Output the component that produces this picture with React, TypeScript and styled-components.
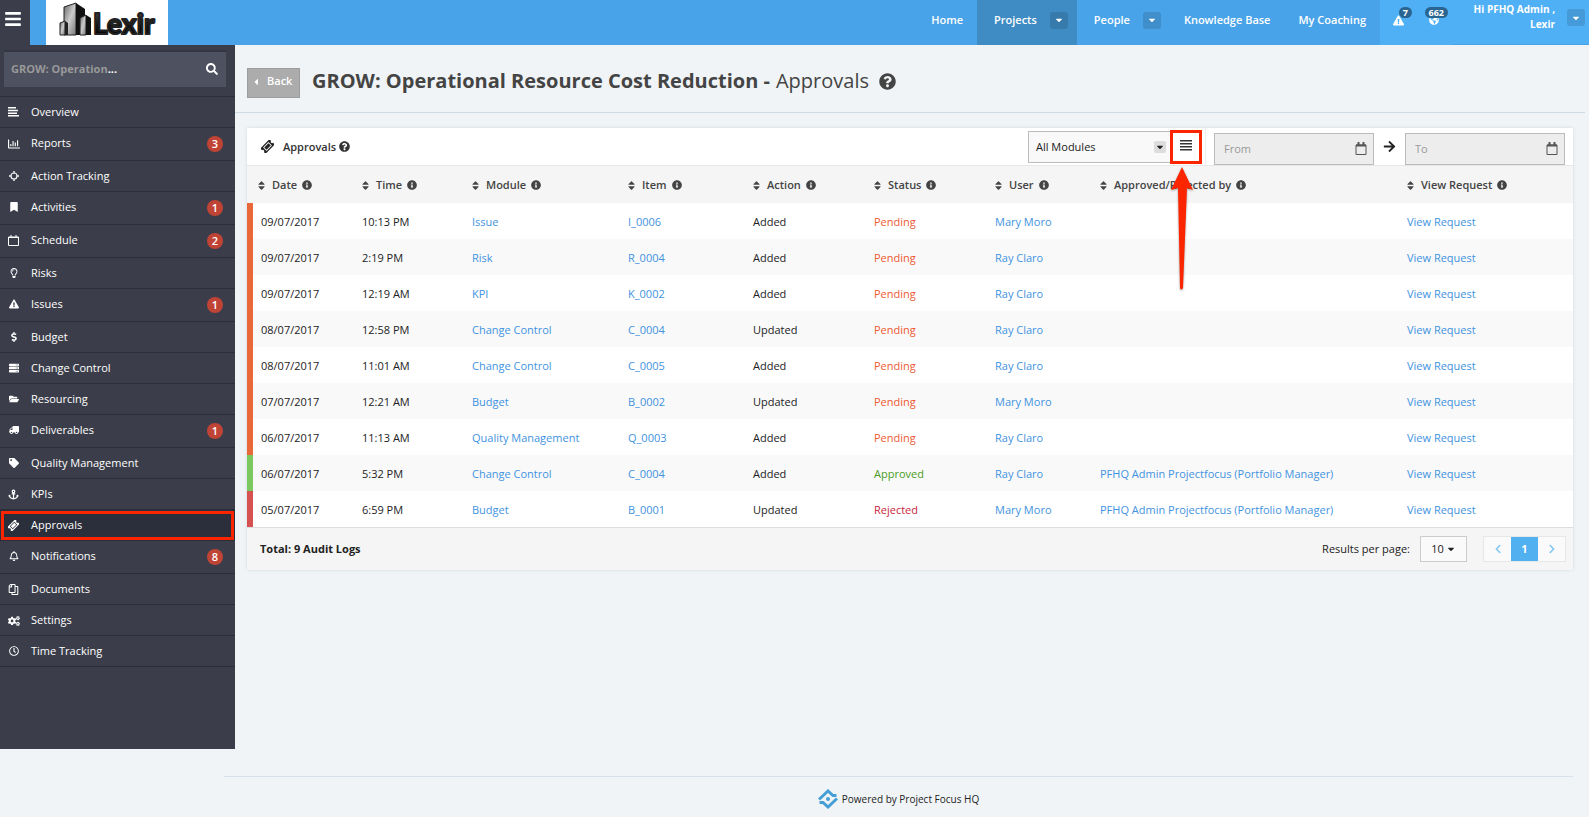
import React from 'react';
import styled, { createGlobalStyle } from 'styled-components';
import {
  FaAnchor, FaArrowRight, FaBars, FaBookmark, FaCaretDown, FaCaretLeft,
  FaChevronLeft, FaChevronRight, FaCogs, FaDollarSign, FaExclamationTriangle,
  FaFolderOpen, FaGlobeAmericas, FaInfoCircle, FaQuestionCircle, FaRegBell,
  FaRegChartBar, FaRegClock, FaRegCopy, FaRegLightbulb, FaSearch, FaServer, FaSort, FaTag,
  FaTruck,
} from 'react-icons/fa';

const Global = createGlobalStyle`
  *, *::before, *::after { box-sizing: border-box; }
  body {
    margin: 0;
    background: #f0f4f7;
    color: #222;
    font: 11px/18px "Open Sans", sans-serif;
  }
  a { color: inherit; text-decoration: none; }
  button, input, select { font: inherit; color: inherit; margin: 0; border-radius: 0; }
  button { cursor: pointer; padding: 0; border: 0; background: none; }
  svg { display: block; flex: none; }
`;

/* ---------- top bar ---------- */

const TopBar = styled.header`
  display: flex;
  height: 45px;
  background: #49a3e8;
  color: #fff;
`;
const MenuToggle = styled.button`
  display: flex;
  justify-content: center;
  width: 30px;
  padding: 10px 4px 0 0;
  background: #3b3e4a;
  color: #fff;
`;
const Brand = styled.a`
  display: block;
  width: 122px;
  margin-left: 16px;
  background: #fff;
`;
const Nav = styled.nav`
  display: flex;
  margin-left: auto;
  font-weight: 600;
`;
const NavItem = styled.div<{ $active?: boolean }>`
  display: flex;
  align-items: center;
  gap: 13px;
  padding: 0 9px 5px 17px;
  background: ${p => (p.$active ? '#3f8cc4' : 'transparent')};
`;
const NavLink = styled.a`
  white-space: nowrap;
`;
const PlainItem = styled(NavItem)`
  padding: 0 14px 5px;
`;
const DropButton = styled.button`
  display: flex;
  align-items: center;
  justify-content: center;
  width: 18px;
  height: 17px;
  border-radius: 3px;
  background: rgba(0, 0, 0, 0.12);
`;
const UserArea = styled.div`
  display: flex;
  width: 209px;
  background: #50b0f5;
`;
const Alert = styled.a`
  position: relative;
  width: 36px;
  padding: 15px 0 0 13px;
`;
const AlertCount = styled.span`
  position: absolute;
  top: 7px;
  right: 4px;
  height: 11px;
  padding: 0 4px;
  border-radius: 6px;
  background: #2a6592;
  font-size: 9px;
  font-weight: 700;
  line-height: 11px;
  text-align: center;
`;
const Profile = styled.div`
  display: flex;
  flex: 1;
  align-items: flex-start;
  justify-content: flex-end;
  gap: 12px;
  padding: 2px 4px 0 0;
  border-bottom: 1px solid #49a3e8;
  font-size: 10px;
  font-weight: 700;
  line-height: 15px;
  text-align: right;
  ${DropButton} { margin-top: 7px; }
`;

/* ---------- side bar ---------- */

const Body = styled.div`
  display: flex;
  align-items: flex-start;
`;
const Side = styled.aside`
  width: 235px;
  flex: none;
  padding: 5px 0 82px;
  background: #3b3e4a;
  color: #fff;
`;
const ProjectPicker = styled.button`
  display: flex;
  align-items: center;
  justify-content: space-between;
  width: 222px;
  height: 37px;
  margin: 0 0 9px 4px;
  padding: 0 8px 1px 7px;
  background: #4e5160;
  border-top: 2px solid #343743;
  font-weight: 700;
`;
const ProjectName = styled.span`
  color: #999;
  em { color: #fff; font-style: normal; }
`;
const SideList = styled.ul`
  margin: 0;
  padding: 0;
  list-style: none;
  border-top: 1px solid #2b2e39;
`;
const SideLink = styled.a<{ $active?: boolean; $counted?: boolean }>`
  display: flex;
  align-items: flex-start;
  height: ${p => (p.$counted ? 33 : 31)}px;
  padding: 6px 12px 0 7px;
  border-bottom: 1px solid #2b2e39;
  background: ${p => (p.$active ? '#2b2e3b' : 'transparent')};
  outline: ${p => (p.$active ? '3px solid #fb2500' : 'none')};
  outline-offset: -4px;
`;
const SideIcon = styled.span`
  display: flex;
  justify-content: center;
  width: 13px;
  margin: 4px 11px 0 0;
  font-size: 10px;
`;
const SideText = styled.span`
  flex: 1;
`;
const Count = styled.span`
  width: 16px;
  height: 16px;
  margin-top: 2px;
  border-radius: 8px;
  background: #c04436;
  font-weight: 600;
  line-height: 16px;
  text-align: center;
`;

/* ---------- content ---------- */

const Main = styled.main`
  flex: 1;
  min-width: 0;
`;
const Heading = styled.div`
  display: flex;
  align-items: flex-start;
  height: 68px;
  margin-right: 4px;
  padding: 23px 0 0 12px;
  border-bottom: 1px solid #cfdae4;
`;
const Back = styled.a`
  display: flex;
  gap: 6px;
  width: 53px;
  height: 30px;
  padding: 3px 0 0 3px;
  border: 1px solid #9c9c9c;
  background: #acacac;
  color: #fff;
  font-weight: 600;
  svg { margin-top: 5px; }
`;
const Title = styled.h1`
  display: flex;
  align-items: center;
  gap: 6px;
  margin: -2px 0 0 12px;
  color: #444;
  font-size: 20px;
  line-height: 30px;
  span { font-weight: 400; }
  svg { margin-left: 4px; }
`;
const Panel = styled.section`
  margin: 15px 16px 0 12px;
  background: #fff;
  box-shadow: 0 0 3px rgba(60, 80, 100, 0.16);
`;
const PanelHead = styled.div`
  display: flex;
  align-items: center;
  height: 38px;
  padding: 0 8px 0 14px;
  border-bottom: 1px solid #e7e7e7;
`;
const PanelTitle = styled.h2`
  display: flex;
  align-items: center;
  gap: 3px;
  margin: 0 auto 0 9px;
  color: #333;
  font-size: 11px;
  font-weight: 600;
`;
const ModulePicker = styled.label`
  display: flex;
  align-items: center;
  position: relative;
  width: 142px;
  height: 32px;
`;
const ModuleSelect = styled.select`
  width: 100%;
  height: 100%;
  padding: 0 24px 0 7px;
  border: 1px solid #bbb;
  border-right: 0;
  background: #f9f9f9;
  appearance: none;
`;
const SelectMark = styled.span`
  position: absolute;
  right: 4px;
  display: flex;
  align-items: center;
  justify-content: center;
  width: 12px;
  height: 12px;
  border-radius: 2px;
  background: #ddd;
  pointer-events: none;
`;
const ListButton = styled.button`
  position: relative;
  display: flex;
  justify-content: center;
  width: 32px;
  height: 34px;
  padding-top: 7px;
  border: 3px solid #fb2500;
  color: #333;
`;
const Pointer = styled.svg`
  position: absolute;
  top: 31px;
  left: -8px;
  z-index: 1;
  filter: drop-shadow(0 1px 1px rgba(0, 0, 0, 0.35));
  pointer-events: none;
`;
const DateField = styled.label`
  display: flex;
  align-items: center;
  width: 160px;
  height: 32px;
  margin-top: 4px;
  padding: 0 6px 0 9px;
  border: 1px solid #bbb;
  background: #ededed;
  color: #555;
`;
const DateInput = styled.input`
  flex: 1;
  min-width: 0;
  padding: 0;
  border: 0;
  outline: 0;
  background: transparent;
  &::placeholder { color: #999; opacity: 1; }
`;
const Range = styled.div`
  display: flex;
  align-items: center;
  gap: 9px;
  height: 37px;
  margin-left: 3px;
  padding-left: 8px;
  border-left: 1px solid #eee;
`;

const Table = styled.table`
  width: 100%;
  table-layout: fixed;
  border-collapse: separate;
  border-spacing: 0;
  thead { background: #f5f5f5; }
  tbody tr:nth-child(even) { background: #f9f9f9; }
`;
const Th = styled.th`
  height: 37px;
  padding: 1px 0 0 6px;
  color: #444;
  font-weight: 600;
  text-align: left;
  &:first-child { padding-left: 9px; }
`;
const ThButton = styled.button`
  display: flex;
  align-items: center;
  gap: 5px;
  font-weight: 600;
  white-space: nowrap;
`;
const Td = styled.td`
  height: 36px;
  padding: 1px 0 0 8px;
  white-space: nowrap;
`;
const tones = { Pending: '#e8683a', Approved: '#7cc860', Rejected: '#d65151' };
const words = { Pending: '#ec5a32', Approved: '#4a9c22', Rejected: '#c81e3c' };
type Status = keyof typeof tones;
const DateCell = styled(Td)<{ $status: Status }>`
  border-left: 6px solid ${p => tones[p.$status]};
`;
const StatusCell = styled(Td)<{ $status: Status }>`
  color: ${p => words[p.$status]};
`;
const Link = styled.a`
  color: #3f93e0;
`;

const PanelFoot = styled.div`
  display: flex;
  align-items: center;
  height: 43px;
  padding: 0 7px 0 13px;
  border-top: 1px solid #ddd;
  background: #f5f5f5;
`;
const Total = styled.strong`
  margin-right: auto;
`;
const PageSize = styled.button`
  display: flex;
  align-items: center;
  justify-content: center;
  gap: 2px;
  width: 47px;
  height: 26px;
  margin: 0 16px 0 10px;
  border: 1px solid #ccc;
  background: #fafafa;
`;
const Pages = styled.nav`
  display: flex;
  border: 1px solid #e7e7e7;
`;
const Page = styled.button<{ $current?: boolean }>`
  display: flex;
  align-items: center;
  justify-content: center;
  width: 27px;
  height: 24px;
  background: ${p => (p.$current ? '#50b0f0' : '#fafafa')};
  color: ${p => (p.$current ? '#fff' : '#86c9f0')};
  font-weight: 700;
`;
const Footer = styled.footer`
  display: flex;
  align-items: center;
  justify-content: center;
  gap: 4px;
  height: 41px;
  margin: 27px 16px 0 224px;
  padding-top: 3px;
  border-top: 1px solid #d8e1ea;
  font-size: 10px;
`;

/* ---------- drawings ---------- */

const TicketIcon = ({ size = 11 }: { size?: number }) => (
  <svg width={size} height={size} viewBox="0 0 24 24" fill="currentColor" aria-hidden="true">
    <g transform="rotate(-45 12 12)">
      <path fillRule="evenodd" d="M0 5h24v4.500a2.500 2.500 0 0 0 0 5V19H0v-4.500a2.500 2.500 0 0 0 0-5zM5 7.500v9h14v-9z" />
      <path d="M6.500 9h11v6h-11z" />
    </g>
  </svg>
);

const CalendarIcon = () => (
  <svg width="12" height="13" viewBox="0 0 12 13" fill="none" stroke="currentColor" aria-hidden="true">
    <path d="M1 3h10v9.500H1z" />
    <path d="M1 3.500h10" strokeWidth="2" />
    <path d="M3.500 0v3M8.500 0v3" strokeWidth="2" />
  </svg>
);

const SideCalendarIcon = () => (
  <svg width="11" height="11" viewBox="0 0 11 11" fill="none" stroke="currentColor" aria-hidden="true">
    <path d="M.5 2h10v8.500H.5zM.5 2.500h10M3 0v2.500M8 0v2.500" />
  </svg>
);

const TargetIcon = () => (
  <svg width="10" height="10" viewBox="0 0 10 10" fill="none" stroke="currentColor" aria-hidden="true">
    <path d="M2 4a3.200 3.200 0 0 1 2-2M6 2a3.200 3.200 0 0 1 2 2M8 6a3.200 3.200 0 0 1-2 2M4 8a3.200 3.200 0 0 1-2-2" strokeWidth="1.200" />
    <path d="M5 0v3M5 7v3M0 5h3M7 5h3" strokeWidth="1.400" />
  </svg>
);

const LinesLeftIcon = () => (
  <svg width="11" height="10" viewBox="0 0 11 10" fill="currentColor" aria-hidden="true">
    <path d="M0 0h8v1.500H0zM0 2.700h10v1.500H0zM0 5.400h9v1.500H0zM0 8.100h11v1.500H0z" />
  </svg>
);

const LinesIcon = () => (
  <svg width="12" height="12" viewBox="0 0 12 12" fill="currentColor" aria-hidden="true">
    <path d="M0 0h12v1.600H0zM0 3h12v1.600H0zM0 6h12v1.600H0zM0 9h12v1.600H0z" />
  </svg>
);

const BrandMark = () => (
  <svg width="122" height="45" viewBox="0 0 122 45" role="img" aria-label="Lexir">
    <defs>
      <linearGradient id="face" x1="0" y1="0" x2="1" y2="1">
        <stop offset="0" stopColor="#666" />
        <stop offset=".5" stopColor="#ccc" />
        <stop offset="1" stopColor="#777" />
      </linearGradient>
      <linearGradient id="ink" x1="0" y1="0" x2="0" y2="1">
        <stop offset="0" stopColor="#555" />
        <stop offset=".6" stopColor="#111" />
        <stop offset="1" stopColor="#000" />
      </linearGradient>
    </defs>
    <path d="M18 7 30 3v32H18z" fill="url(#face)" stroke="#222" />
    <path d="m30 3 9 6v26h-9z" fill="#111" />
    <path d="m14 23 5-2v14h-5z" fill="url(#face)" stroke="#222" />
    <path d="m19 21 3 2v12h-3z" fill="#222" />
    <path d="m34 18 6-3v20h-6z" fill="url(#face)" stroke="#222" />
    <path d="m40 15 5 3v17h-5z" fill="#111" />
    <text x="47" y="34" fill="url(#ink)" stroke="#222" strokeWidth="2" strokeLinejoin="round" fontFamily="Lato, sans-serif" fontWeight="900" fontSize="28">Lexir</text>
  </svg>
);

const FocusMark = () => (
  <svg width="20" height="20" viewBox="0 0 20 20" fill="none" stroke="#459fd6" aria-hidden="true">
    <path d="M1 10.500 10 2l5 4.500h3.500" strokeWidth="3" />
    <path d="M19 9.500 10 18l-5-4.500H1.500" strokeWidth="3" />
    <circle cx="10" cy="10" r="2" fill="#459fd6" stroke="none" />
  </svg>
);

/* ---------- data ---------- */

const sections: { icon: React.ReactNode; label: string; count?: number; active?: boolean }[] = [
  { icon: <LinesLeftIcon />, label: 'Overview' },
  { icon: <FaRegChartBar size={12} />, label: 'Reports', count: 3 },
  { icon: <TargetIcon />, label: 'Action Tracking' },
  { icon: <FaBookmark />, label: 'Activities', count: 1 },
  { icon: <SideCalendarIcon />, label: 'Schedule', count: 2 },
  { icon: <FaRegLightbulb />, label: 'Risks' },
  { icon: <FaExclamationTriangle />, label: 'Issues', count: 1 },
  { icon: <FaDollarSign />, label: 'Budget' },
  { icon: <FaServer />, label: 'Change Control' },
  { icon: <FaFolderOpen />, label: 'Resourcing' },
  { icon: <FaTruck transform="scale(-1 1)" />, label: 'Deliverables', count: 1 },
  { icon: <FaTag />, label: 'Quality Management' },
  { icon: <FaAnchor size={11} />, label: 'KPIs' },
  { icon: <TicketIcon />, label: 'Approvals', active: true },
  { icon: <FaRegBell />, label: 'Notifications', count: 8 },
  { icon: <FaRegCopy size={11} transform="scale(-1 1)" />, label: 'Documents' },
  { icon: <FaCogs size={12} />, label: 'Settings' },
  { icon: <FaRegClock />, label: 'Time Tracking' },
];

const columns: [string, number][] = [
  ['Date', 107], ['Time', 110], ['Module', 156], ['Item', 125], ['Action', 121],
  ['Status', 121], ['User', 105], ['Approved/Rejected by', 307], ['View Request', 174],
];

const manager = 'PFHQ Admin Projectfocus (Portfolio Manager)';
const logs: [string, string, string, string, string, Status, string, string][] = [
  ['09/07/2017', '10:13 PM', 'Issue', 'I_0006', 'Added', 'Pending', 'Mary Moro', ''],
  ['09/07/2017', '2:19 PM', 'Risk', 'R_0004', 'Added', 'Pending', 'Ray Claro', ''],
  ['09/07/2017', '12:19 AM', 'KPI', 'K_0002', 'Added', 'Pending', 'Ray Claro', ''],
  ['08/07/2017', '12:58 PM', 'Change Control', 'C_0004', 'Updated', 'Pending', 'Ray Claro', ''],
  ['08/07/2017', '11:01 AM', 'Change Control', 'C_0005', 'Added', 'Pending', 'Ray Claro', ''],
  ['07/07/2017', '12:21 AM', 'Budget', 'B_0002', 'Updated', 'Pending', 'Mary Moro', ''],
  ['06/07/2017', '11:13 AM', 'Quality Management', 'Q_0003', 'Added', 'Pending', 'Ray Claro', ''],
  ['06/07/2017', '5:32 PM', 'Change Control', 'C_0004', 'Added', 'Approved', 'Ray Claro', manager],
  ['05/07/2017', '6:59 PM', 'Budget', 'B_0001', 'Updated', 'Rejected', 'Mary Moro', manager],
];

export default function App() {
  return (
    <>
      <Global />
      <TopBar>
        <MenuToggle aria-label="Toggle menu"><FaBars size={18} /></MenuToggle>
        <Brand href="#"><BrandMark /></Brand>
        <Nav>
          <PlainItem><NavLink href="#">Home</NavLink></PlainItem>
          <NavItem $active>
            <NavLink href="#">Projects</NavLink>
            <DropButton aria-label="Projects menu"><FaCaretDown size={10} /></DropButton>
          </NavItem>
          <NavItem>
            <NavLink href="#">People</NavLink>
            <DropButton aria-label="People menu"><FaCaretDown size={10} /></DropButton>
          </NavItem>
          <PlainItem><NavLink href="#">Knowledge Base</NavLink></PlainItem>
          <PlainItem><NavLink href="#">My Coaching</NavLink></PlainItem>
        </Nav>
        <UserArea>
          <Alert href="#"><FaExclamationTriangle size={11} /><AlertCount>7</AlertCount></Alert>
          <Alert href="#"><FaGlobeAmericas size={10} /><AlertCount>662</AlertCount></Alert>
          <Profile>
            <span>Hi PFHQ Admin ,<br />Lexir</span>
            <DropButton aria-label="Account menu"><FaCaretDown size={10} /></DropButton>
          </Profile>
        </UserArea>
      </TopBar>
      <Body>
        <Side>
          <ProjectPicker aria-label="Choose a project">
            <ProjectName>GROW: Operation<em>...</em></ProjectName>
            <FaSearch size={12} />
          </ProjectPicker>
          <SideList>
            {sections.map(s => (
              <li key={s.label}>
                <SideLink href="#" $active={s.active} $counted={s.count !== undefined}>
                  <SideIcon>{s.icon}</SideIcon>
                  <SideText>{s.label}</SideText>
                  {s.count !== undefined && <Count>{s.count}</Count>}
                </SideLink>
              </li>
            ))}
          </SideList>
        </Side>
        <Main>
          <Heading>
            <Back href="#"><FaCaretLeft size={10} />Back</Back>
            <Title>
              GROW: Operational Resource Cost Reduction - <span>Approvals</span>
              <FaQuestionCircle size={17} />
            </Title>
          </Heading>
          <Panel>
            <PanelHead>
              <TicketIcon size={13} />
              <PanelTitle>Approvals<FaQuestionCircle size={11} /></PanelTitle>
              <ModulePicker>
                <ModuleSelect aria-label="Module"><option>All Modules</option></ModuleSelect>
                <SelectMark><FaCaretDown size={10} /></SelectMark>
              </ModulePicker>
              <ListButton aria-label="List options">
                <LinesIcon />
                <Pointer width="34" height="132" viewBox="0 0 34 132" aria-hidden="true">
                  <path d="M17 3 28 26l-6-2-4 100q-2 3-3 0L13 24l-7 2z" fill="#fb2500" />
                </Pointer>
              </ListButton>
              <Range>
                <DateField><DateInput aria-label="From" placeholder="From" /><CalendarIcon /></DateField>
                <FaArrowRight size={13} />
                <DateField><DateInput aria-label="To" placeholder="To" /><CalendarIcon /></DateField>
              </Range>
            </PanelHead>
            <Table>
              <colgroup>{columns.map(([name, width]) => <col key={name} width={width} />)}</colgroup>
              <thead>
                <tr>
                  {columns.map(([name]) => (
                    <Th key={name} scope="col">
                      <ThButton><FaSort size={11} />{name}<FaInfoCircle size={10} /></ThButton>
                    </Th>
                  ))}
                </tr>
              </thead>
              <tbody>
                {logs.map(([date, time, module, item, action, status, user, by]) => (
                  <tr key={date + time}>
                    <DateCell $status={status}>{date}</DateCell>
                    <Td>{time}</Td>
                    <Td><Link href="#">{module}</Link></Td>
                    <Td><Link href="#">{item}</Link></Td>
                    <Td>{action}</Td>
                    <StatusCell $status={status}>{status}</StatusCell>
                    <Td><Link href="#">{user}</Link></Td>
                    <Td>{by && <Link href="#">{by}</Link>}</Td>
                    <Td><Link href="#">View Request</Link></Td>
                  </tr>
                ))}
              </tbody>
            </Table>
            <PanelFoot>
              <Total>Total: 9 Audit Logs</Total>
              <span>Results per page:</span>
              <PageSize>10<FaCaretDown size={10} /></PageSize>
              <Pages aria-label="Pages">
                <Page aria-label="Previous page"><FaChevronLeft size={10} /></Page>
                <Page $current>1</Page>
                <Page aria-label="Next page"><FaChevronRight size={10} /></Page>
              </Pages>
            </PanelFoot>
          </Panel>
        </Main>
      </Body>
      <Footer><FocusMark />Powered by Project Focus HQ</Footer>
    </>
  );
}
